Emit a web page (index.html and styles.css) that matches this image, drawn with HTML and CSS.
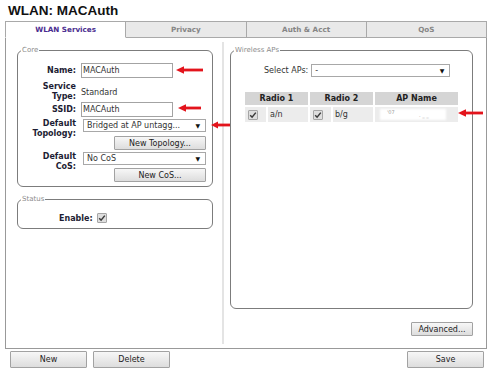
FILE: index.html
```html
<!DOCTYPE html>
<html lang="en">
<head>
  <meta charset="UTF-8" />
  <title>WLAN: MACAuth</title>
  <link rel="stylesheet" href="styles.css">
</head>
<body>
  <h1 class="title">WLAN: MACAuth</h1>

  <div class="tabs">
    <div class="tab active">WLAN Services</div>
    <div class="tab">Privacy</div>
    <div class="tab">Auth &amp; Acct</div>
    <div class="tab">QoS</div>
  </div>

  <div class="panel">
    <div class="col-left">
      <div class="group core">
        <span class="legend">Core</span>

        <div class="row row-name">
          <div class="lbl one">Name:</div>
          <div class="ctl">
            <input class="txt" type="text" value="MACAuth">
            <svg class="arrow arrow-name" width="27" height="8" viewBox="0 0 27 8"><path d="M0 4L8 0.3V7.7Z"/><rect x="7" y="2.6" width="20" height="2.8"/></svg>
          </div>
        </div>

        <div class="row row-type">
          <div class="lbl">Service<br>Type:</div>
          <div class="ctl value">Standard</div>
        </div>

        <div class="row row-ssid">
          <div class="lbl one">SSID:</div>
          <div class="ctl">
            <input class="txt" type="text" value="MACAuth">
            <svg class="arrow arrow-ssid" width="23" height="8" viewBox="0 0 23 8"><path d="M0 4L8 0.3V7.7Z"/><rect x="7" y="2.6" width="16" height="2.8"/></svg>
          </div>
        </div>

        <div class="row row-topo">
          <div class="lbl">Default<br>Topology:</div>
          <div class="ctl">
            <div class="sel"><span>Bridged at AP untagg...</span><span class="caret">&#9660;</span></div>
            <button class="btn btn-side">New Topology...</button>
            <svg class="arrow arrow-topo" width="20" height="8" viewBox="0 0 20 8"><path d="M0 4L7 0.5V7.5Z"/><rect x="6" y="2.6" width="14" height="2.8"/></svg>
          </div>
        </div>

        <div class="row row-cos">
          <div class="lbl">Default<br>CoS:</div>
          <div class="ctl">
            <div class="sel"><span>No CoS</span><span class="caret">&#9660;</span></div>
            <button class="btn btn-side btn-cos">New CoS...</button>
          </div>
        </div>
      </div>

      <div class="group status">
        <span class="legend">Status</span>
        <div class="enable">
          <span class="lbl-inline">Enable:</span>
          <span class="chk"><svg width="8" height="8" viewBox="0 0 8 8"><path d="M1.2 4.2L3.1 6.2L6.8 1.6"/></svg></span>
        </div>
      </div>
    </div>

    <div class="divider"></div>

    <div class="col-right">
      <div class="group aps">
        <span class="legend">Wireless APs</span>

        <div class="select-row">
          <span>Select APs:</span>
          <div class="sel sel-aps"><span>-</span><span class="caret">&#9660;</span></div>
        </div>

        <div class="ap-table">
          <div class="th span2">Radio 1</div>
          <div class="th span2">Radio 2</div>
          <div class="th">AP Name</div>

          <div class="td td-chk"><span class="chk"><svg width="8" height="8" viewBox="0 0 8 8"><path d="M1.2 4.2L3.1 6.2L6.8 1.6"/></svg></span></div>
          <div class="td">a/n</div>
          <div class="td td-chk"><span class="chk"><svg width="8" height="8" viewBox="0 0 8 8"><path d="M1.2 4.2L3.1 6.2L6.8 1.6"/></svg></span></div>
          <div class="td">b/g</div>
          <div class="td td-ap">
            <span class="blur"></span>
            <span class="speck s1">'07</span>
            <span class="speck s2">. _ _</span>
          </div>
        </div>

        <svg class="arrow arrow-ap" width="25" height="8" viewBox="0 0 25 8"><path d="M0 4L8 0.3V7.7Z"/><rect x="7" y="2.6" width="18" height="2.8"/></svg>
      </div>

      <button class="btn btn-adv">Advanced...</button>
    </div>
  </div>

  <div class="footer">
    <div class="footer-left">
      <button class="btn btn-foot">New</button>
      <button class="btn btn-foot">Delete</button>
    </div>
    <button class="btn btn-foot">Save</button>
  </div>
</body>
</html>
```

FILE: styles.css
```css
body {
  margin: 0;
  width: 490px;
  height: 373px;
  overflow: hidden;
  background: #fff;
  font-family: "DejaVu Sans", sans-serif;
  font-size: 8px;
  color: #333;
}

.title {
  margin: 0;
  height: 21px;
  box-sizing: border-box;
  padding: 3px 0 0 8px;
  font: bold 13.5px/15px "Liberation Sans", Arial, sans-serif;
  color: #111;
}

/* tabs */
.tabs {
  display: flex;
  width: 482px;
  height: 17px;
  margin-left: 5px;
}

.tab {
  flex: 1;
  box-sizing: border-box;
  border: 1px solid #a9a9a9;
  border-left: none;
  background: #e9e9e9;
  color: #858585;
  font-weight: bold;
  font-size: 7.2px;
  line-height: 15px;
  text-align: center;
}

.tab:first-child {
  border-left: 1px solid #a9a9a9;
}

.tab.active {
  background: #fff;
  color: #4b2d8f;
  border-bottom-color: #fff;
}

/* main panel */
.panel {
  display: flex;
  width: 482px;
  height: 311px;
  margin-left: 5px;
  box-sizing: border-box;
  border: 1px solid #999;
  border-top: none;
  padding: 12px 13px 0 11px;
}

.col-left {
  width: 196px;
  display: flex;
  flex-direction: column;
}

.divider {
  width: 2px;
  background: #e4e4e4;
  margin: -8px 6px 4px 9px;
}

.col-right {
  width: 243px;
  display: flex;
  flex-direction: column;
}

.group {
  position: relative;
  box-sizing: border-box;
  border: 1px solid #7c7c7c;
  border-radius: 6px;
}

.legend {
  position: absolute;
  top: -5px;
  left: 3px;
  padding: 0 1px;
  background: #fff;
  color: #8c8c8c;
  font-size: 7px;
  line-height: 8px;
}

/* core */
.core {
  height: 137px;
}

.row {
  display: flex;
  position: relative;
}

.lbl {
  width: 58px;
  flex: none;
  text-align: right;
  font-weight: bold;
  color: #1d1d33;
  line-height: 10px;
}

.lbl.one {
  line-height: 15px;
}

.ctl {
  position: relative;
  margin-left: 5px;
  width: 125px;
  display: flex;
  flex-direction: column;
}

.value {
  justify-content: center;
}

.row-name {
  margin-top: 12px;
}

.row-type {
  margin-top: 4px;
  height: 20px;
}

.row-topo {
  margin-top: 2px;
}

.row-cos {
  margin-top: 2px;
}

.txt {
  width: 92px;
  height: 15px;
  box-sizing: border-box;
  margin: 0;
  padding: 0 1px;
  border: 1px solid #a3a3a3;
  font: 8px "DejaVu Sans", sans-serif;
  color: #333;
  outline: none;
}

.sel {
  display: flex;
  justify-content: space-between;
  align-items: center;
  width: 123px;
  height: 13px;
  margin-left: 2px;
  box-sizing: border-box;
  border: 1px solid #a8a8a8;
  padding: 0 5px 0 3px;
  background: #fff;
  color: #333;
}

.caret {
  font-size: 6px;
  color: #111;
}

.btn {
  box-sizing: border-box;
  margin: 0;
  padding: 0;
  border: 1px solid #a2a2a2;
  border-radius: 1px;
  background: linear-gradient(#f7f7f7, #dddddd);
  font: 8px "DejaVu Sans", sans-serif;
  color: #222;
  text-align: center;
}

.btn-side {
  width: 92px;
  height: 14px;
  margin: 4px 0 0 33px;
}

.btn-cos {
  margin-top: 3px;
}

.arrow {
  position: absolute;
  fill: #e3141c;
}

.arrow-name {
  left: 95px;
  top: 3px;
}

.arrow-ssid {
  left: 97px;
  top: 2px;
}

.arrow-topo {
  left: 130px;
  top: 2px;
}

.arrow-ap {
  left: 227px;
  top: 58px;
}

/* status */
.status {
  height: 30px;
  margin-top: 12px;
}

.enable {
  display: flex;
  align-items: center;
  padding: 13px 0 0 41px;
}

.lbl-inline {
  font-weight: bold;
  color: #1d1d33;
  margin-right: 4px;
}

.chk {
  display: inline-flex;
  align-items: center;
  justify-content: center;
  width: 10px;
  height: 10px;
  box-sizing: border-box;
  border: 1px solid #a5a5a5;
  border-radius: 1px;
  background: #dedede;
}

.chk path {
  fill: none;
  stroke: #3a3a3a;
  stroke-width: 1.5;
}

/* wireless aps */
.aps {
  height: 259px;
}

.select-row {
  display: flex;
  align-items: center;
  margin-top: 13px;
  padding-left: 33px;
  color: #333;
}

.sel-aps {
  width: 139px;
  margin-left: 3px;
}

.ap-table {
  display: grid;
  grid-template-columns: 21px 40px 21px 40px 83px;
  grid-template-rows: 13px 15px;
  gap: 2px;
  margin: 15px 0 0 14px;
  width: 213px;
}

.th {
  background: #d5d5d5;
  font-weight: bold;
  color: #222;
  text-align: center;
  line-height: 13px;
}

.span2 {
  grid-column: span 2;
}

.td {
  background: #ececec;
  line-height: 15px;
  padding-left: 2px;
  color: #333;
}

.td-chk {
  display: flex;
  align-items: center;
  padding-left: 3px;
}

.td-ap {
  position: relative;
  padding: 0;
}

.blur {
  position: absolute;
  left: 5px;
  top: 2px;
  width: 66px;
  height: 11px;
  background: #fff;
  filter: blur(1.2px);
}

.speck {
  position: absolute;
  color: #9a9a9a;
  font-size: 5px;
  line-height: 6px;
}

.s1 {
  left: 12px;
  top: 2px;
}

.s2 {
  left: 44px;
  top: 5px;
}

.btn-adv {
  align-self: flex-end;
  width: 62px;
  height: 14px;
  margin-top: 13px;
}

/* footer */
.footer {
  display: flex;
  justify-content: space-between;
  padding: 2px 6px 0 10px;
}

.footer-left {
  display: flex;
  gap: 6px;
}

.btn-foot {
  width: 77px;
  height: 17px;
}
```
